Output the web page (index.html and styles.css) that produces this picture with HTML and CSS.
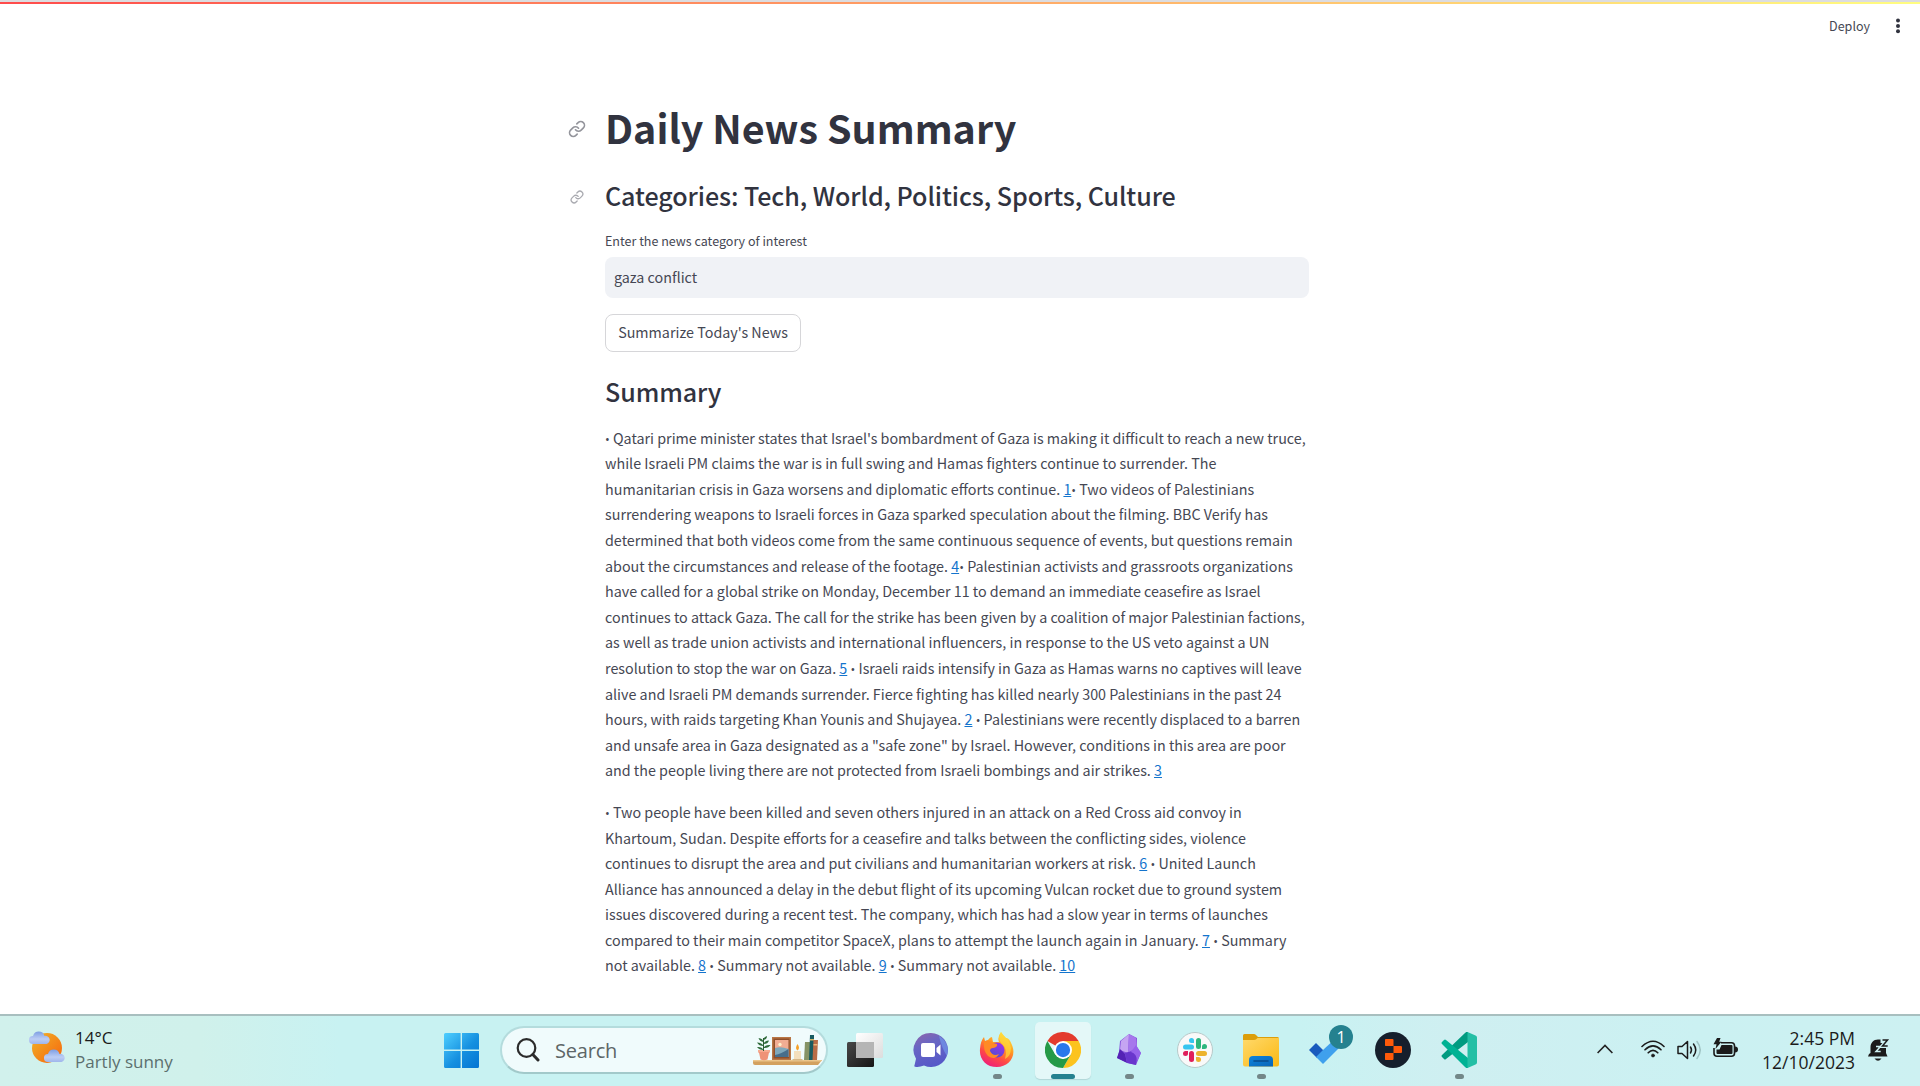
FILE: index.html
```html
<!DOCTYPE html>
<html lang="en">
<head>
<meta charset="utf-8">
<title>Daily News Summary</title>
<link rel="stylesheet" href="styles.css">
</head>
<body>
<div class="decoration"></div>
<header class="toolbar">
  <span class="deploy">Deploy</span>
  <svg class="kebab" width="6" height="16" viewBox="0 0 6 16" fill="#31333f"><circle cx="3" cy="2.6" r="2"/><circle cx="3" cy="8" r="2"/><circle cx="3" cy="13.2" r="2"/></svg>
</header>
<main class="content">
  <h1 class="title"><svg class="anchor" width="18" height="18" viewBox="0 0 24 24"><path d="M10 13a5 5 0 0 0 7.54.54l3-3a5 5 0 0 0-7.07-7.07l-1.72 1.71"/><path d="M14 11a5 5 0 0 0-7.54-.54l-3 3a5 5 0 0 0 7.07 7.07l1.71-1.71"/></svg>Daily News Summary</h1>
  <h3 class="heading"><svg class="anchor small" width="14" height="14" viewBox="0 0 24 24"><path d="M10 13a5 5 0 0 0 7.54.54l3-3a5 5 0 0 0-7.07-7.07l-1.72 1.71"/><path d="M14 11a5 5 0 0 0-7.54-.54l-3 3a5 5 0 0 0 7.07 7.07l1.71-1.71"/></svg>Categories: Tech, World, Politics, Sports, Culture</h3>
  <label class="label">Enter the news category of interest</label>
  <div class="input">gaza conflict</div>
  <button class="button">Summarize Today's News</button>
  <h3 class="heading summary">Summary</h3>
  <p class="text"><i>•</i> Qatari prime minister states that Israel's bombardment of Gaza is making it difficult to reach a new truce,<br>while Israeli PM claims the war is in full swing and Hamas fighters continue to surrender. The<br>humanitarian crisis in Gaza worsens and diplomatic efforts continue. <a>1</a><i>•</i> Two videos of Palestinians<br>surrendering weapons to Israeli forces in Gaza sparked speculation about the filming. BBC Verify has<br>determined that both videos come from the same continuous sequence of events, but questions remain<br>about the circumstances and release of the footage. <a>4</a><i>•</i> Palestinian activists and grassroots organizations<br>have called for a global strike on Monday, December 11 to demand an immediate ceasefire as Israel<br>continues to attack Gaza. The call for the strike has been given by a coalition of major Palestinian factions,<br>as well as trade union activists and international influencers, in response to the US veto against a UN<br>resolution to stop the war on Gaza. <a>5</a> <i>•</i> Israeli raids intensify in Gaza as Hamas warns no captives will leave<br>alive and Israeli PM demands surrender. Fierce fighting has killed nearly 300 Palestinians in the past 24<br>hours, with raids targeting Khan Younis and Shujayea. <a>2</a> <i>•</i> Palestinians were recently displaced to a barren<br>and unsafe area in Gaza designated as a "safe zone" by Israel. However, conditions in this area are poor<br>and the people living there are not protected from Israeli bombings and air strikes. <a>3</a></p>
  <p class="text"><i>•</i> Two people have been killed and seven others injured in an attack on a Red Cross aid convoy in<br>Khartoum, Sudan. Despite efforts for a ceasefire and talks between the conflicting sides, violence<br>continues to disrupt the area and put civilians and humanitarian workers at risk. <a>6</a> <i>•</i> United Launch<br>Alliance has announced a delay in the debut flight of its upcoming Vulcan rocket due to ground system<br>issues discovered during a recent test. The company, which has had a slow year in terms of launches<br>compared to their main competitor SpaceX, plans to attempt the launch again in January. <a>7</a> <i>•</i> Summary<br>not available. <a>8</a> <i>•</i> Summary not available. <a>9</a> <i>•</i> Summary not available. <a>10</a></p>
</main>
<footer class="taskbar">
  <div class="weather">
    <svg width="36" height="34" viewBox="0 0 36 34">
      <defs>
        <linearGradient id="sun" x1="0" y1="0" x2="1" y2="1"><stop offset="0" stop-color="#f0b429"/><stop offset="1" stop-color="#f7630c"/></linearGradient>
        <linearGradient id="cloud" x1="0" y1="0" x2="0" y2="1"><stop offset="0" stop-color="#7f9fe3"/><stop offset=".6" stop-color="#bccdf4"/><stop offset="1" stop-color="#9fb6ec"/></linearGradient>
      </defs>
      <circle cx="18" cy="18" r="15" fill="url(#sun)"/>
      <path d="M4 14a4 4 0 0 1 0-8.100a6 6 0 0 1 11.500 0a4 4 0 0 1 2 8.100z" fill="url(#cloud)"/>
      <path d="M19 32a4 4 0 0 1 0-8.100a6 6 0 0 1 11.500 0a4 4 0 0 1 2 8.100z" fill="url(#cloud)"/>
    </svg>
    <div class="weather-text"><span>14°C</span><span class="muted">Partly sunny</span></div>
  </div>
  <div class="apps">
    <svg class="start" width="35" height="35" viewBox="0 0 35 35">
      <defs><linearGradient id="win" x1="0" y1="0" x2="1" y2="1" gradientUnits="objectBoundingBox"><stop offset="0" stop-color="#4fcfff"/><stop offset=".55" stop-color="#1590e0"/><stop offset="1" stop-color="#0474d2"/></linearGradient></defs>
      <path d="M1.500 0H16.600V16.600H0V1.500A1.500 1.500 0 0 1 1.500 0zM18 0H33.500A1.500 1.500 0 0 1 35 1.500V16.600H18zM0 18H16.600V35H1.500A1.500 1.500 0 0 1 0 33.500zM18 18H35V33.500A1.500 1.500 0 0 1 33.500 35H18z" fill="url(#win)"/>
    </svg>
    <div class="search">
      <svg width="24" height="24" viewBox="0 0 24 24" fill="none" stroke="#2b2b2b"><circle cx="10.500" cy="10" r="8.800" stroke-width="2.200"/><path d="M16.800 16.500L22 22" stroke-width="3" stroke-linecap="round"/></svg>
      <span class="search-text">Search</span>
      <svg class="shelf" width="70" height="31" viewBox="0 0 70 31">
        <path d="M0 25h69l-4 5H2q-2 0-2-2z" fill="#d3a15f"/><path d="M0 25h69l-1 1.500H0z" fill="#ecc68c"/>
        <path d="M5 15h12v2.500h-1l-1.500 7q-3.500 1.500-7 0L6 17.500H5z" fill="#ef9277"/><path d="M5 15h12v2H5z" fill="#f6aa8f"/>
        <path d="M10.500 16V3" stroke="#2c5b35" stroke-width="1"/>
        <path d="M10.500 5q0-3 3.500-4q0 3.500-3.500 4zM10.500 7Q6.500 6.500 5.500 3q4.500.5 5 4zM10.500 9q1-3.500 5.500-3.500q-1 3.500-5.500 3.500zM10.500 11Q6 11 4 7.500q5 0 6.500 3.500zM10.500 13q1.500-3.500 7-3q-2 3.500-7 3zM10.500 15Q6 15 4 12q5-.5 6.500 3z" fill="#2f6b3b"/>
        <path d="M19 2h19v23H19z" fill="#b87645"/><path d="M20.500 3.500h16v20h-16z" fill="#8f4f2a"/><path d="M22 5h13.500v17H22z" fill="#f1ad93"/><path d="M22 13q6-2 13.500 1v8H22z" fill="#7fa8bb"/><path d="M22 20q6-1 13.500-6v8H22z" fill="#486e8b"/><circle cx="27" cy="9.500" r="1.700" fill="#fff0cb"/>
        <path d="M41 16h7v8.500q-3.500 1-7 0z" fill="#f3dfbd"/><path d="M39.500 24h10v1.500h-10z" fill="#d7b887"/><path d="M44.500 9q3 4 0 6.500q-3-2 0-6.500z" fill="#f5a128"/>
        <path d="M52 7h5v18h-6z" fill="#859365"/><path d="M57 0h4v25h-5z" fill="#185b61"/><path d="M57 4h4v1.500h-4z" fill="#d1b466"/><path d="M60.500 5h4.500l-1 20h-4.500z" fill="#b76c47"/><path d="M60.500 9h4v1.500h-4z" fill="#e6b67c"/>
      </svg>
    </div>
    <div class="app-grid">
      <div class="app"><svg width="36" height="36" viewBox="0 0 36 36">
        <defs><linearGradient id="tv1" x1="0" y1="0" x2="1" y2="1"><stop offset="0" stop-color="#484848"/><stop offset="1" stop-color="#161616"/></linearGradient><linearGradient id="tv2" x1="0" y1="0" x2="1" y2="1"><stop offset="0" stop-color="#fff"/><stop offset="1" stop-color="#dcdcdc"/></linearGradient></defs>
        <rect x="0" y="10" width="27" height="25" rx="1.500" fill="url(#tv1)"/><rect x="9" y="1" width="27" height="25" rx="1.500" fill="url(#tv2)"/><path d="M9 10h18v16H9z" fill="#b5b5b5"/></svg></div>
      <div class="app"><svg width="36" height="36" viewBox="0 0 36 36">
        <defs><linearGradient id="chat" x1=".2" y1="0" x2=".6" y2="1"><stop offset="0" stop-color="#8a66ae"/><stop offset=".35" stop-color="#6866c4"/><stop offset="1" stop-color="#5558c8"/></linearGradient></defs>
        <path d="M18 1a17 17 0 1 1-7 32.500q-5 2-9 1.200q-1-.3-.5-1.400l1.500-6.500A17 17 0 0 1 18 1z" fill="url(#chat)"/><path d="M26 4a17 17 0 0 1 8 20q-5-7-8-20z" fill="#75a0f2" opacity=".6"/>
        <rect x="8" y="11" width="14" height="14" rx="2" fill="#fff"/><path d="M23.500 16l4-3.500v11l-4-3.500z" fill="#fff"/></svg></div>
      <div class="app running"><svg width="36" height="36" viewBox="0 0 36 36">
        <defs><linearGradient id="fox" x1=".8" y1="0" x2=".3" y2="1"><stop offset="0" stop-color="#fff04a"/><stop offset=".4" stop-color="#ff9a22"/><stop offset=".7" stop-color="#ff4a45"/><stop offset="1" stop-color="#ed1f7b"/></linearGradient><linearGradient id="globe" x1=".8" y1="0" x2=".2" y2="1"><stop offset="0" stop-color="#a12fea"/><stop offset="1" stop-color="#4b51d0"/></linearGradient></defs>
        <path d="M22 0q2 3 5 6q3-1 6 7c5 12-4 22-15 22C7 35 0 27 1 17Q1.500 9 5 5l1 4q2-1 3-1q2-3 4-3l1 5h6Q18 5 22 0z" fill="url(#fox)"/><circle cx="18" cy="18" r="7.500" fill="url(#globe)"/><path d="M5 10q6-3 9 1l4 1q1 3-4 4q-3 0-3 3q3 6 9 3q-4 7-11 2Q4 19 5 10z" fill="#ff8a25"/><path d="M22 0q2 3 5 6q4 4 5 10q0 8-6 11q3-10-3-15Q18 7 22 0z" fill="#ffd83a" opacity=".7"/></svg></div>
      <div class="app running active"><svg width="36" height="36" viewBox="0 0 48 48">
        <path d="M24 24L3.200 12A24 24 0 0 1 44.800 12H24z" fill="#e33b2e"/><path d="M44.800 12A24 24 0 0 1 24 48L34.400 30L24 12z" fill="#fcc31e"/><path d="M24 48A24 24 0 0 1 3.200 12L13.600 30L24 36l10.400-6z" fill="#249a47"/><circle cx="24" cy="24" r="12" fill="#fff"/><circle cx="24" cy="24" r="9.500" fill="#2878eb"/></svg></div>
      <div class="app running"><svg width="36" height="36" viewBox="0 0 36 36">
        <path d="M18 2l8 4v9l4 6l-5 12l-8-2l-11-5l2-6l1-11z" fill="#8656dc"/><path d="M18 2l-8 7l-1 9l8 3z" fill="#c5a5f2"/><path d="M18 2l7 4l1 9l-9 6z" fill="#a678ec"/><path d="M9 17l5 5l2 9l-10-5z" fill="#5422b5"/><path d="M14 21q8-4 12 2l-1 10l-9-2z" fill="#6936cd"/><path d="M25 13l5 8l-4 8q0-7-6-9z" fill="#9663eb"/></svg></div>
      <div class="app"><svg width="36" height="36" viewBox="0 0 36 36">
        <circle cx="18" cy="18" r="17.500" fill="#f9f9f9" stroke="#b6c9c9" stroke-width="1"/><g stroke-width="5" stroke-linecap="round"><path d="M8.500 15h6" stroke="#36c5f0"/><path d="M21.500 8.500v6" stroke="#2eb67d"/><path d="M21.500 21.500h6" stroke="#ecb22e"/><path d="M14.500 21.500v6" stroke="#e01e5a"/></g><path d="M17 11V8.500a2.500 2.500 0 1 0-2.500 2.500z" fill="#36c5f0"/><path d="M25 17h2.500a2.500 2.500 0 1 0-2.500-2.500z" fill="#2eb67d"/><path d="M19 25v2.500a2.500 2.500 0 1 0 2.500-2.500z" fill="#ecb22e"/><path d="M11 19H8.500a2.500 2.500 0 1 0 2.500 2.500z" fill="#e01e5a"/></svg></div>
      <div class="app running"><svg width="36" height="36" viewBox="0 0 36 36">
        <defs><linearGradient id="folder" x1="0" y1="0" x2="1" y2="1"><stop offset="0" stop-color="#ffd96b"/><stop offset="1" stop-color="#fbb914"/></linearGradient><linearGradient id="tray" x1="0" y1="0" x2="1" y2="1"><stop offset="0" stop-color="#0c83dc"/><stop offset="1" stop-color="#0865b7"/></linearGradient></defs>
        <path d="M0 3.500Q0 2 1.500 2H11q1 0 2 1l2 2h19.500q1.500 0 1.500 1.500V12H0z" fill="#dc9e0b"/><path d="M0 8h11q1.500 0 2.500-1l1-1H36v26.500q0 2-2 2H2q-2 0-2-2z" fill="url(#folder)"/><path d="M6 34.500V28q0-4 4-4h16q4 0 4 4v6.500z" fill="url(#tray)"/><path d="M11 29h14" stroke="#074b8c" stroke-width="1.600" stroke-linecap="round"/></svg></div>
      <div class="app"><svg width="36" height="36" viewBox="0 0 36 36"><path d="M0 18l7-7l8 8l-7 7z" fill="#195abd"/><path d="M7 25l7 7L35 11l-6-7L14 18z" fill="#3fa0ed"/></svg><span class="badge">1</span></div>
      <div class="app"><svg width="36" height="36" viewBox="0 0 36 36"><circle cx="18" cy="18" r="18" fill="#161f2c"/><path d="M10.500 7h7q1 0 1 1v6h-8q-.5 0-.5-1V8q0-.5.500-1zM18.500 14h7.500q1 0 1 1v5q0 1-1 1h-7.500zM10.500 21h8v6q0 1-1 1h-7q-.5 0-.5-1v-5q0-1 .500-1z" fill="#ff5a0a"/></svg></div>
      <div class="app running"><svg width="36" height="36" viewBox="0 0 36 36"><path d="M1 25q-1-1 0-2L24 1q2-2 3-1v10L5 27q-1 1-2 0z" fill="#009b80"/><path d="M1 12q-1-1 0-2l2-2q1-1 2 0l22 18v10q-1 1-3-1z" fill="#00b294"/><path d="M26.500 0l8 3.500q1.500.5 1.500 2v25q0 1.500-1.500 2l-8 3.500z" fill="#24bfa5"/></svg></div>
    </div>
  </div>
  <div class="tray">
    <svg class="chevron" width="16" height="10" viewBox="0 0 16 10" fill="none" stroke="#222" stroke-width="1.600"><path d="M.6 9L8 1.500L15.400 9"/></svg>
    <svg class="wifi" width="24" height="18" viewBox="0 0 24 18" fill="none" stroke="#1b1b1b" stroke-width="1.600" stroke-linecap="round"><path d="M1 6.500Q12-4 23 6.500M4 9.800Q12 2 20 9.800M7.200 12.800Q12 8 16.800 12.800"/><circle cx="12" cy="15.500" r="1.600" fill="#1b1b1b" stroke-width=".5"/></svg>
    <svg class="volume" width="25" height="20" viewBox="0 0 25 20" fill="none" stroke="#1b1b1b" stroke-width="1.500" stroke-linecap="round" stroke-linejoin="round"><path d="M1 6.500h4L10.500 1.500v17L5 13.500H1z"/><path d="M13.500 7q2 3 0 6M16.500 4q4.500 6 0 12"/><path d="M20 1.500q6.500 8.500 0 17" stroke="#9fc3c3"/></svg>
    <svg class="battery" width="25" height="20" viewBox="0 0 25 20"><path d="M8 4.800h10.500a3 3 0 0 1 3 3v7.400a3 3 0 0 1-3 3H4a3 3 0 0 1-3-3V10" fill="none" stroke="#1b1b1b" stroke-width="1.600"/><path d="M8.500 7h10q1 0 1 1v7q0 1-1 1h-14q-1 0-1-1v-3.500l3 0z" fill="#1b1b1b"/><path d="M22 8.500q3 0 3 3t-3 3z" fill="#1b1b1b"/><path d="M4 0h3.500L6.200 3.800H8.500L2.500 11l1-4.800H.5z" fill="#1b1b1b"/></svg>
    <div class="clock"><span>2:45 PM</span><span>12/10/2023</span></div>
    <svg class="bell" width="22" height="24" viewBox="0 0 22 24"><path d="M2.500 15V9.500C2.500 5 5.500 1.500 10 1.500h2.500V5H18v10l1.500 3.500H0L1 16z" fill="#1b1b1b"/><path d="M6.500 20.500h7q-3.500 4.500-7 0z" fill="#1b1b1b"/><path d="M8 8.500h4.500L8 13.500h4.700" fill="none" stroke="#cdf1f2" stroke-width="1.500"/><path d="M14.500 2h5l-5 6h5.200" fill="none" stroke="#cdf1f2" stroke-width="4"/><path d="M14.500 2h5l-5 6h5.200" fill="none" stroke="#1b1b1b" stroke-width="1.500"/></svg>
  </div>
</footer>
</body>
</html>
```
FILE: styles.css
```css
* { box-sizing: border-box; }
body {
  margin: 0;
  height: 1086px;
  overflow: hidden;
  display: flex;
  flex-direction: column;
  background: #fff;
  color: #31333f;
  font-family: "Noto Sans CJK SC", "Open Sans", sans-serif;
}
.decoration {
  flex: none;
  height: 4px;
  border-top: 2px solid #dcdcdf;
  background: linear-gradient(90deg, #ff4b4b, #fffd80);
}
.toolbar {
  flex: none;
  height: 44px;
  display: flex;
  justify-content: flex-end;
  align-items: center;
  gap: 25px;
  padding-right: 19px;
}
.deploy { font-size: 12.53px; line-height: 20px; color: #454753; }
.content {
  flex: 1;
  width: 704px;
  margin-left: 605px;
  padding-top: 52px;
  display: flex;
  flex-direction: column;
  align-items: stretch;
  white-space: nowrap;
}
.title, .heading { margin: 0; position: relative; }
.title { font-size: 39.4px; font-weight: 700; line-height: 53px; }
.heading { font-size: 25.07px; font-weight: 500; line-height: 34px; margin-top: 25px; letter-spacing: -0.003em; }
.anchor {
  position: absolute;
  left: -37px;
  top: 20px;
  fill: none;
  stroke: #94959c;
  stroke-width: 2.2;
  stroke-linecap: round;
  stroke-linejoin: round;
}
.anchor.small { left: -35px; top: 12px; stroke: #a9aab0; }
.label { font-size: 12.53px; line-height: 21px; margin-top: 18px; color: #454753; }
.input {
  height: 41px;
  margin-top: 6px;
  padding: 0 9px;
  border-radius: 8px;
  background: #f0f2f6;
  font-size: 14.32px;
  line-height: 40px;
  color: #454753;
}
.button {
  width: 196px;
  height: 38px;
  margin-top: 16px;
  padding: 0 0 2px;
  border: 1px solid #d6d6d9;
  border-radius: 8px;
  background: #fff;
  color: #454753;
  font: 14.32px/34px "Noto Sans CJK SC", "Open Sans", sans-serif;
}
.summary { margin-top: 22px; margin-bottom: 16.6px; }
.text { margin: 0 0 16px; font-size: 14.325px; line-height: 25.6px; color: #454753; }
.text a { color: #1474cd; text-decoration: underline; }
.text i { font: normal 12.6px/1 "Open Sans", sans-serif; }

.taskbar {
  flex: none;
  height: 72px;
  border-top: 2px solid #a8bfbf;
  background: linear-gradient(90deg, #d1f1ec 0, #d0f1eb 200px, #c8f2f2 340px, #c8f2f2 1300px, #cfeff1 1450px, #cbf1f2 1700px, #cdf1f2 100%);
  display: flex;
  color: #1b1b1b;
  font-family: "Open Sans", "Noto Sans", sans-serif;
  font-size: 17px;
}
.weather { width: 444px; display: flex; padding: 14px 0 0 29px; gap: 10px; }
.weather-text, .clock { display: flex; flex-direction: column; line-height: 24px; }
.weather-text { margin-top: -4px; }
.muted { color: #5c6f6e; }
.apps { display: flex; width: 1048px; }
.start { margin: 17px 21px 0 0; }
.search {
  width: 328px;
  height: 48px;
  margin: 10px 4px 0 0;
  padding: 0 3px 0 14px;
  display: flex;
  align-items: center;
  border: 2px solid #b4dcdd;
  border-bottom-color: #a2c9ca;
  border-radius: 24px;
  background: #f0fbfc;
}
.search-text { margin-left: 15px; font-size: 20px; letter-spacing: -0.2px; color: #5d6667; }
.shelf { margin-left: auto; }
.app-grid { display: grid; grid-template-columns: repeat(10, 66px); height: 70px; }
.app { position: relative; display: flex; justify-content: center; padding-top: 16px; }
.app svg { position: relative; }
.running::after {
  content: "";
  position: absolute;
  left: 29px;
  top: 58px;
  width: 9px;
  height: 5px;
  border-radius: 3px;
  background: #738788;
}
.active::before {
  content: "";
  position: absolute;
  left: 5px;
  top: 6px;
  width: 56px;
  height: 57px;
  border-radius: 5px;
  background: #e4f8f8;
  box-shadow: 0 1px 1px #b2d6d7;
}
.active::after { left: 21px; width: 24px; background: #25818f; }
.badge {
  position: absolute;
  left: 35px;
  top: 9px;
  width: 24px;
  height: 24px;
  border-radius: 12px;
  background: #25818f;
  color: #fff;
  font-size: 16px;
  line-height: 24px;
  text-align: center;
}
.tray { flex: 1; display: flex; }
.tray svg { flex: none; }
.chevron { margin: 28px 28px 0 105px; }
.wifi { margin: 24px 12px 0 0; }
.volume { margin: 24px 11px 0 0; }
.battery { margin: 22px 0 0; }
.clock { width: 117px; margin-top: 10px; text-align: right; font-size: 17.5px; }
.bell { margin: 22px 0 0 13px; }
```
